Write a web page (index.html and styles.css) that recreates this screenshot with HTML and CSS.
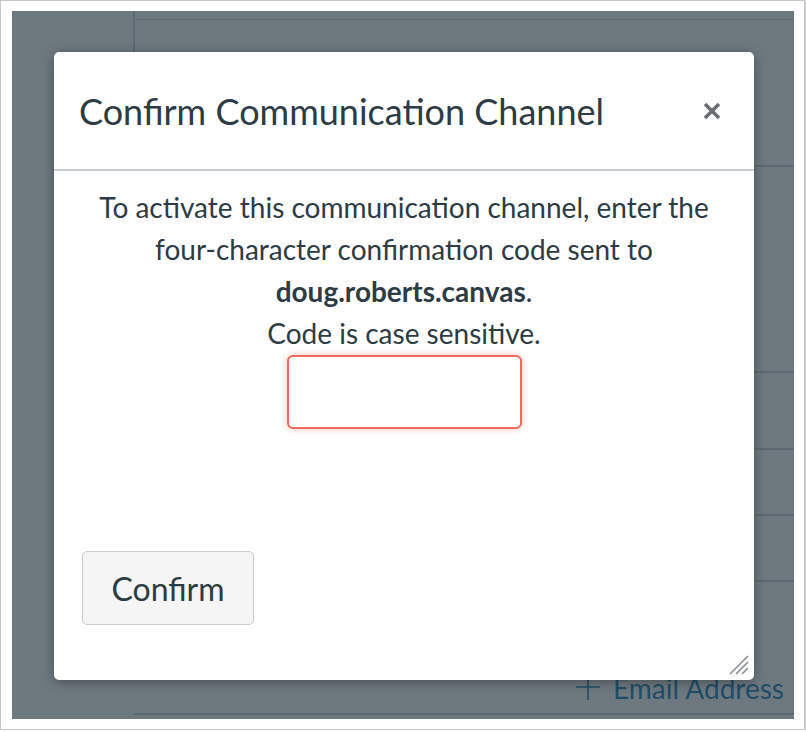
FILE: index.html
```html
<!DOCTYPE html>
<html lang="en">
<head>
<meta charset="utf-8">
<title>Confirm Communication Channel</title>
<link rel="stylesheet" href="styles.css">
</head>
<body>
<div class="frame">
  <div class="screen">
    <div class="page">
      <div class="side"></div>
      <div class="main">
        <div class="row r0"></div>
        <div class="row r1"></div>
        <div class="row r2"></div>
        <div class="row r3"></div>
        <div class="row r4"></div>
        <div class="row r5"></div>
        <div class="row r6">
          <a class="add-link">
            <svg class="plus" viewBox="0 0 26 26" width="26" height="26"><path d="M13 1V25M1 12H25" stroke="currentColor" stroke-width="1.6" fill="none"/></svg>
            <span>Email Address</span>
          </a>
        </div>
      </div>
    </div>
    <div class="overlay"></div>
    <div class="modal">
      <div class="modal-header">
        <h1 class="modal-title">Confirm Communication Channel</h1>
        <button class="close" aria-label="Close">
          <svg viewBox="0 0 18 18" width="18" height="18"><path d="M2 2L16 16M16 2L2 16" stroke="currentColor" stroke-width="3.6" stroke-linecap="butt" fill="none"/></svg>
        </button>
      </div>
      <div class="modal-body">
        <p class="msg">To activate this communication channel, enter the<br>four-character confirmation code sent to<br><strong>doug.roberts.canvas</strong>.<br>Code is case sensitive.</p>
        <input class="code" type="text" aria-label="Confirmation code">
      </div>
      <div class="modal-footer">
        <button class="btn">Confirm</button>
      </div>
      <svg class="grip" viewBox="0 0 24 24" width="24" height="24"><path d="M23 5L5 23M23 11L11 23M23 17L17 23" stroke="#8a8f94" stroke-width="1.6" fill="none"/></svg>
    </div>
  </div>
</div>
</body>
</html>
```
FILE: styles.css
```css
html, body {
  margin: 0;
  padding: 0;
  background: #ffffff;
}

.frame {
  width: 805px;
  height: 730px;
  box-sizing: border-box;
  border: 1px solid #c6c6c6;
  box-shadow: 1px 1px 2px rgba(0, 0, 0, 0.25);
  padding: 10px 0 0 11px;
  background: #ffffff;
}

.screen {
  position: relative;
  width: 782px;
  height: 708px;
  overflow: hidden;
  font-family: Lato, "Liberation Sans", sans-serif;
}

.page {
  display: flex;
  height: 100%;
  background: #ffffff;
}

.side {
  width: 121px;
  flex: none;
}

.main {
  flex: 1;
  display: flex;
  flex-direction: column;
}

.row {
  border-bottom: 2px solid #c7cdd1;
  border-left: 2px solid #c7cdd1;
  flex: none;
}

.r0 { height: 8px; border-bottom-width: 1px; }
.r1 { height: 145px; }
.r2 { height: 204px; }
.r3 { height: 75px; }
.r4 { height: 64px; }
.r5 { height: 64px; }
.r6 {
  border-left-color: transparent;
  display: flex;
  justify-content: flex-end;
  align-items: flex-end;
  padding-right: 10px;
  padding-bottom: 8px;
  box-sizing: border-box;
  height: 133px;
}

.add-link {
  display: flex;
  align-items: center;
  gap: 12px;
  color: #0374b5;
  font-size: 28px;
  line-height: 34px;
}

.plus {
  display: block;
}

.overlay {
  position: absolute;
  inset: 0;
  background: rgba(45, 59, 69, 0.69);
}

.modal {
  position: absolute;
  left: 42px;
  top: 41px;
  width: 700px;
  height: 628px;
  background: #ffffff;
  border-radius: 5px;
  box-shadow: 0 2px 12px rgba(0, 0, 0, 0.35);
  display: flex;
  flex-direction: column;
  color: #2d3b45;
}

.modal-header {
  height: 117px;
  flex: none;
  border-bottom: 2px solid #c7cdd1;
  display: flex;
  align-items: center;
  justify-content: space-between;
  padding: 0 33px 0 25px;
}

.modal-title {
  margin: 0;
  font-size: 36px;
  font-weight: 400;
  color: #2d3b45;
  padding-top: 1px;
}

.close {
  border: 0;
  background: none;
  padding: 0;
  color: #6a6e72;
  display: flex;
}

.modal-body {
  flex: 1;
  padding-top: 15px;
  text-align: center;
}

.msg {
  margin: 0;
  font-size: 28px;
  line-height: 42px;
  color: #2d3b45;
}

.msg strong {
  font-weight: 700;
}

.code {
  display: block;
  margin: 1px auto 0;
  width: 235px;
  height: 74px;
  box-sizing: border-box;
  border: 2px solid #ee6a5e;
  border-radius: 6px;
  box-shadow: 0 0 6px rgba(238, 80, 70, 0.35);
  outline: none;
  background: #ffffff;
}

.modal-footer {
  flex: none;
  padding: 0 0 55px 28px;
}

.btn {
  width: 172px;
  height: 74px;
  box-sizing: border-box;
  background: #f5f5f5;
  border: 1px solid #c7cdd1;
  border-radius: 5px;
  font-family: Lato, "Liberation Sans", sans-serif;
  font-size: 32px;
  color: #2d3b45;
  padding: 0;
}

.grip {
  position: absolute;
  right: 5px;
  bottom: 5px;
}
```
